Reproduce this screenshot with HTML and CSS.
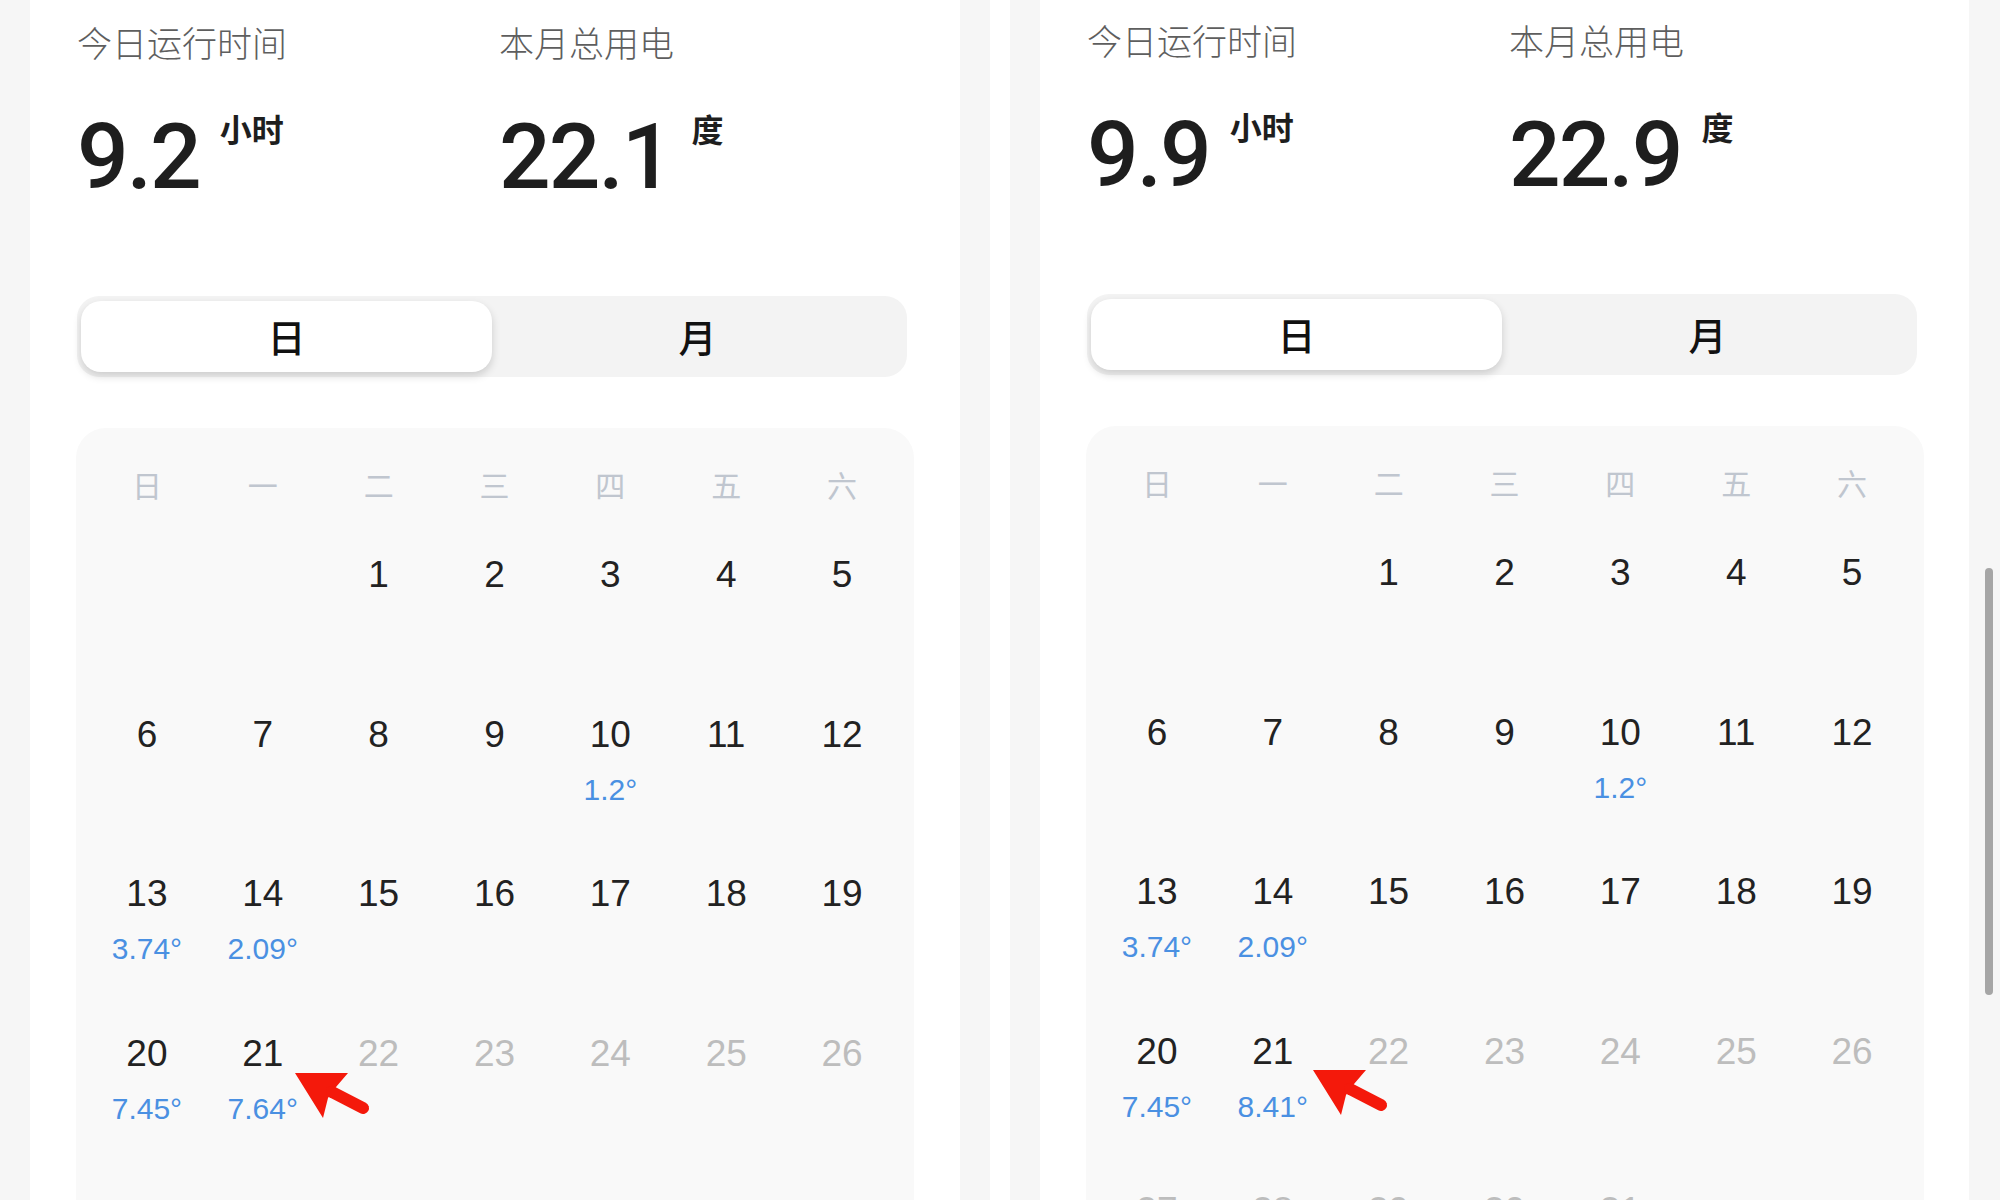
FILE: index.html
```html
<!DOCTYPE html>
<html lang="zh-CN">
<head>
<meta charset="utf-8">
<title>用电日历</title>
<link rel="stylesheet" href="styles.css">
</head>
<body>
<div class="screens">
  <section class="shot">
    <div class="card">
      <div class="stats">
        <div class="stat">
          <div class="label">今日运行时间</div>
          <div class="value"><span class="num">9.2</span><span class="unit">小时</span></div>
        </div>
        <div class="stat">
          <div class="label">本月总用电</div>
          <div class="value"><span class="num">22.1</span><span class="unit">度</span></div>
        </div>
      </div>
      <div class="seg">
        <div class="seg-item active">日</div>
        <div class="seg-item">月</div>
      </div>
      <div class="cal">
        <div class="week"><span>日</span><span>一</span><span>二</span><span>三</span><span>四</span><span>五</span><span>六</span></div>
        <div class="days">
          <div class="day"></div><div class="day"></div>
          <div class="day"><span class="d">1</span></div>
          <div class="day"><span class="d">2</span></div>
          <div class="day"><span class="d">3</span></div>
          <div class="day"><span class="d">4</span></div>
          <div class="day"><span class="d">5</span></div>
          <div class="day"><span class="d">6</span></div>
          <div class="day"><span class="d">7</span></div>
          <div class="day"><span class="d">8</span></div>
          <div class="day"><span class="d">9</span></div>
          <div class="day"><span class="d">10</span><span class="v">1.2°</span></div>
          <div class="day"><span class="d">11</span></div>
          <div class="day"><span class="d">12</span></div>
          <div class="day"><span class="d">13</span><span class="v">3.74°</span></div>
          <div class="day"><span class="d">14</span><span class="v">2.09°</span></div>
          <div class="day"><span class="d">15</span></div>
          <div class="day"><span class="d">16</span></div>
          <div class="day"><span class="d">17</span></div>
          <div class="day"><span class="d">18</span></div>
          <div class="day"><span class="d">19</span></div>
          <div class="day"><span class="d">20</span><span class="v">7.45°</span></div>
          <div class="day"><span class="d">21</span><span class="v">7.64°</span></div>
          <div class="day future"><span class="d">22</span></div>
          <div class="day future"><span class="d">23</span></div>
          <div class="day future"><span class="d">24</span></div>
          <div class="day future"><span class="d">25</span></div>
          <div class="day future"><span class="d">26</span></div>
        </div>
      </div>
    </div>
    <svg class="arrow arrow-left" width="84" height="60" viewBox="0 0 84 60">
      <polygon points="5,8 58,8 46,22 38,33 33,53" fill="#f4190b"/>
      <line x1="42" y1="27" x2="73" y2="43" stroke="#f4190b" stroke-width="12" stroke-linecap="round"/>
    </svg>
  </section>

  <section class="shot shot-right">
    <div class="card">
      <div class="stats">
        <div class="stat">
          <div class="label">今日运行时间</div>
          <div class="value"><span class="num">9.9</span><span class="unit">小时</span></div>
        </div>
        <div class="stat">
          <div class="label">本月总用电</div>
          <div class="value"><span class="num">22.9</span><span class="unit">度</span></div>
        </div>
      </div>
      <div class="seg">
        <div class="seg-item active">日</div>
        <div class="seg-item">月</div>
      </div>
      <div class="cal">
        <div class="week"><span>日</span><span>一</span><span>二</span><span>三</span><span>四</span><span>五</span><span>六</span></div>
        <div class="days">
          <div class="day"></div><div class="day"></div>
          <div class="day"><span class="d">1</span></div>
          <div class="day"><span class="d">2</span></div>
          <div class="day"><span class="d">3</span></div>
          <div class="day"><span class="d">4</span></div>
          <div class="day"><span class="d">5</span></div>
          <div class="day"><span class="d">6</span></div>
          <div class="day"><span class="d">7</span></div>
          <div class="day"><span class="d">8</span></div>
          <div class="day"><span class="d">9</span></div>
          <div class="day"><span class="d">10</span><span class="v">1.2°</span></div>
          <div class="day"><span class="d">11</span></div>
          <div class="day"><span class="d">12</span></div>
          <div class="day"><span class="d">13</span><span class="v">3.74°</span></div>
          <div class="day"><span class="d">14</span><span class="v">2.09°</span></div>
          <div class="day"><span class="d">15</span></div>
          <div class="day"><span class="d">16</span></div>
          <div class="day"><span class="d">17</span></div>
          <div class="day"><span class="d">18</span></div>
          <div class="day"><span class="d">19</span></div>
          <div class="day"><span class="d">20</span><span class="v">7.45°</span></div>
          <div class="day"><span class="d">21</span><span class="v">8.41°</span></div>
          <div class="day future"><span class="d">22</span></div>
          <div class="day future"><span class="d">23</span></div>
          <div class="day future"><span class="d">24</span></div>
          <div class="day future"><span class="d">25</span></div>
          <div class="day future"><span class="d">26</span></div>
          <div class="day future"><span class="d">27</span></div>
          <div class="day future"><span class="d">28</span></div>
          <div class="day future"><span class="d">29</span></div>
          <div class="day future"><span class="d">30</span></div>
          <div class="day future"><span class="d">31</span></div>
        </div>
      </div>
    </div>
    <svg class="arrow arrow-right" width="84" height="60" viewBox="0 0 84 60">
      <polygon points="5,8 58,8 46,22 38,33 33,53" fill="#f4190b"/>
      <line x1="42" y1="27" x2="73" y2="43" stroke="#f4190b" stroke-width="12" stroke-linecap="round"/>
    </svg>
    <div class="scrollbar"></div>
  </section>
</div>
</body>
</html>
```

FILE: styles.css
```css
html, body {
  margin: 0;
  padding: 0;
  background: #ffffff;
  overflow: hidden;
}

body {
  width: 2000px;
  height: 1200px;
  font-family: "Noto Sans CJK SC", "Liberation Sans", sans-serif;
}

.screens {
  display: flex;
  gap: 20px;
  height: 1200px;
}

.shot {
  position: relative;
  width: 990px;
  height: 1200px;
  box-sizing: border-box;
  padding: 0 30px;
  background: #f6f6f6;
  overflow: hidden;
}

.shot-right {
  padding: 0 31px 0 30px;
}

.card {
  height: 100%;
  background: #ffffff;
  box-sizing: border-box;
  padding: 21px 0 0 47px;
  overflow: hidden;
}

.shot-right .card {
  padding-top: 19px;
}

.stats {
  display: flex;
}

.stat {
  width: 422px;
}

.label {
  font-size: 35px;
  line-height: 42px;
  font-weight: 300;
  color: #5e5e5e;
}

.value {
  display: flex;
  align-items: flex-start;
  margin-top: 48px;
}

.num {
  font-family: "Roboto", "Liberation Sans", sans-serif;
  font-size: 91px;
  line-height: 92px;
  font-weight: 500;
  color: #1e1e1e;
  letter-spacing: -2px;
}

.unit {
  font-size: 32px;
  line-height: 32px;
  font-weight: 700;
  color: #1e1e1e;
  margin-top: 1px;
  margin-left: 20px;
}

.seg {
  display: flex;
  width: 830px;
  height: 81px;
  box-sizing: border-box;
  margin-top: 93px;
  padding: 5px 4px;
  border-radius: 22px;
  background: #f3f3f3;
}

.seg-item {
  flex: 1;
  display: flex;
  align-items: center;
  justify-content: center;
  padding-bottom: 3px;
  border-radius: 20px;
  font-size: 38px;
  font-weight: 500;
  color: #111111;
}

.seg-item.active {
  background: #ffffff;
  box-shadow: 0 4px 8px rgba(0, 0, 0, 0.16);
}

.cal {
  width: 838px;
  margin-top: 51px;
  margin-left: -1px;
  box-sizing: border-box;
  padding: 36px 14px 0 13px;
  height: 900px;
  border-radius: 30px 30px 0 0;
  background: #f9f9f9;
}

.week {
  display: grid;
  grid-template-columns: repeat(7, 1fr);
  height: 40px;
  font-size: 30px;
  line-height: 40px;
  color: #c0c6cf;
  text-align: center;
}

.days {
  display: grid;
  grid-template-columns: repeat(7, 1fr);
  grid-auto-rows: 159.5px;
  margin-top: 49px;
}

.day {
  display: flex;
  flex-direction: column;
  align-items: center;
}

.d {
  font-family: "Liberation Sans", sans-serif;
  font-size: 37px;
  line-height: 44px;
  color: #222222;
}

.day.future .d {
  color: #bdbdbd;
}

.v {
  font-family: "Liberation Sans", sans-serif;
  font-size: 30px;
  line-height: 36px;
  margin-top: 15px;
  color: #4a90e2;
}

.arrow {
  position: absolute;
}

.arrow-left {
  left: 290px;
  top: 1065px;
}

.arrow-right {
  left: 298px;
  top: 1062px;
}

.scrollbar {
  position: absolute;
  left: 975px;
  top: 568px;
  width: 8px;
  height: 427px;
  border-radius: 4px;
  background: #a6a6a6;
}
```
